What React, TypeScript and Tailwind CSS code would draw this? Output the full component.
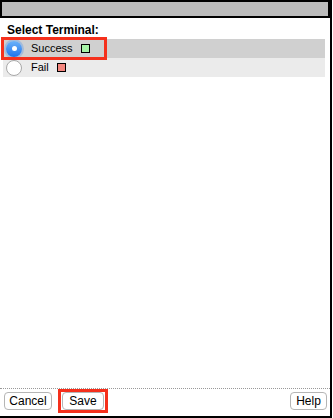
import React from "react";

function Radio({ checked }: { checked: boolean }) {
  if (checked) {
    return (
      <span className="flex h-[16px] w-[16px] items-center justify-center rounded-full bg-gradient-to-b from-[#6cb3fa] to-[#1d72e8] shadow-[0_0_0_2px_rgba(80,150,240,0.35)]">
        <span className="h-[5px] w-[5px] rounded-full bg-white" />
      </span>
    );
  }
  return <span className="h-[16px] w-[16px] rounded-full border border-[#a8a8a8] bg-white" />;
}

export default function App() {
  const options = [
    { label: "Success", color: "bg-[#a6f3a6]", checked: true },
    { label: "Fail", color: "bg-[#f4877f]", checked: false },
  ];

  return (
    <div className="flex h-[418px] w-[332px] flex-col border-r-2 border-b-2 border-black bg-white font-['Liberation_Sans',Arial,sans-serif] text-[11px] text-black">
      <div className="h-[18px] w-[330px] border-2 border-black bg-[#bbbbbb]" />

      <div className="pl-[7px] pt-[5px] text-[12px] font-bold leading-[14px]">Select Terminal:</div>

      <div className="mt-[2px] w-[325px] pl-[3px]">
        {options.map((o, i) => (
          <div
            key={o.label}
            className={`flex h-[19px] items-center ${i === 0 ? "bg-[#d0d0d0]" : "bg-[#ebebeb]"}`}
          >
            <div
              className={`flex h-full items-center gap-[8px] pl-[3px] pr-[15px] ${
                o.checked ? "outline-[3px] outline-solid outline-[#f5301c] -outline-offset-1" : ""
              }`}
            >
              <Radio checked={o.checked} />
              <span className="ml-[1px] leading-none">{o.label}</span>
              <span className={`h-[9px] w-[9px] border border-black ${o.color}`} />
            </div>
          </div>
        ))}
      </div>

      <div className="flex-1" />

      <div className="border-t border-dotted border-[#999]" />
      <div className="flex items-center justify-between pl-[4px] pr-[3px] pb-[3px] text-[12px]">
        <div className="flex items-center gap-[6px]">
          <button className="h-[18px] w-[48px] rounded-[4px] border border-[#b5b5b5] bg-white leading-none">
            Cancel
          </button>
          <div className="border-[3px] border-[#f5301c] px-[1px]">
            <button className="block h-[18px] w-[42px] rounded-[4px] border border-[#b5b5b5] bg-white leading-none">
              Save
            </button>
          </div>
        </div>
        <button className="h-[18px] w-[37px] rounded-[4px] border border-[#b5b5b5] bg-white leading-none">
          Help
        </button>
      </div>
    </div>
  );
}
